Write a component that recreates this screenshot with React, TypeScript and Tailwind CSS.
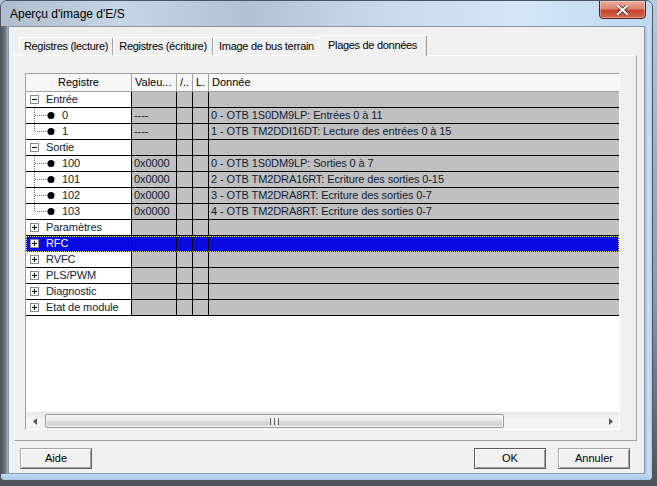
import React from 'react';

type Row = {
  kind: 'group' | 'child';
  label: string;
  open?: boolean;
  last?: boolean;
  val?: string;
  data?: string;
  selected?: boolean;
};

const rows: Row[] = [
  { kind: 'group', label: 'Entrée', open: true },
  { kind: 'child', label: '0', val: '----', data: '0 - OTB 1S0DM9LP: Entrées 0 à 11' },
  { kind: 'child', label: '1', val: '----', data: '1 - OTB TM2DDI16DT: Lecture des entrées 0 à 15', last: true },
  { kind: 'group', label: 'Sortie', open: true },
  { kind: 'child', label: '100', val: '0x0000', data: '0 - OTB 1S0DM9LP: Sorties 0 à 7' },
  { kind: 'child', label: '101', val: '0x0000', data: '2 - OTB TM2DRA16RT: Ecriture des sorties 0-15' },
  { kind: 'child', label: '102', val: '0x0000', data: '3 - OTB TM2DRA8RT: Ecriture des sorties 0-7' },
  { kind: 'child', label: '103', val: '0x0000', data: '4 - OTB TM2DRA8RT: Ecriture des sorties 0-7', last: true },
  { kind: 'group', label: 'Paramètres' },
  { kind: 'group', label: 'RFC', selected: true },
  { kind: 'group', label: 'RVFC' },
  { kind: 'group', label: 'PLS/PWM' },
  { kind: 'group', label: 'Diagnostic' },
  { kind: 'group', label: 'Etat de module' },
];

const tabs = [
  { label: 'Registres (lecture)', w: 'w-[94px]' },
  { label: 'Registres (écriture)', w: 'w-[100px]' },
  { label: 'Image de bus terrain', w: 'w-[107px]' },
];

function ExpandBox({ open }: { open?: boolean }) {
  return (
    <svg width="9" height="9" viewBox="0 0 9 9" className="shrink-0" shapeRendering="crispEdges">
      <rect x="0.5" y="0.5" width="8" height="8" fill="#fff" stroke="#8c8c8c" />
      <line x1="2" y1="4.5" x2="7" y2="4.5" stroke="#000" />
      {!open && <line x1="4.5" y1="2" x2="4.5" y2="7" stroke="#000" />}
    </svg>
  );
}

function ChildLines({ last }: { last?: boolean }) {
  return (
    <svg width="36" height="15" viewBox="0 0 36 15" className="shrink-0">
      <line x1="8.5" y1="0" x2="8.5" y2={last ? 7.5 : 15} stroke="#7a7a7a" strokeDasharray="1 1" shapeRendering="crispEdges" />
      <line x1="9" y1="7.5" x2="22" y2="7.5" stroke="#7a7a7a" strokeDasharray="1 1" shapeRendering="crispEdges" />
      <circle cx="25" cy="7.5" r="3.5" fill="#000" />
    </svg>
  );
}

function GridRow({ row }: { row: Row }) {
  const sel = row.selected;
  const cell = sel ? 'bg-[#0808e0]' : 'bg-[#c0c0c0]';
  return (
    <div
      className={`flex h-[16px] border-b border-black leading-[15px] tracking-[-0.1px] ${
        sel ? 'text-white outline-1 outline-dotted outline-[#e6e680] -outline-offset-1' : 'text-[#0f1c36]'
      }`}
    >
      <div className={`w-[106px] shrink-0 border-r border-black flex items-center ${sel ? 'bg-[#0808e0]' : 'bg-white'}`}>
        {row.kind === 'group' ? (
          <>
            <span className="ml-[4px]">
              <ExpandBox open={row.open} />
            </span>
            <span className="ml-[7px] whitespace-nowrap">{row.label}</span>
          </>
        ) : (
          <>
            <ChildLines last={row.last} />
            <span className="whitespace-nowrap">{row.label}</span>
          </>
        )}
      </div>
      <div className={`w-[45px] shrink-0 border-r border-black pl-[2px] ${cell}`}>{row.val}</div>
      <div className={`w-[16px] shrink-0 border-r border-black ${cell}`} />
      <div className={`w-[16px] shrink-0 border-r border-black ${cell}`} />
      <div className={`flex-1 pl-[2px] whitespace-nowrap overflow-hidden ${cell}`}>{row.data}</div>
    </div>
  );
}

function HeaderCell({ w, children, center }: { w: string; children?: React.ReactNode; center?: boolean }) {
  return (
    <div
      className={`${w} shrink-0 h-full border-r border-[#a0a0a0] shadow-[inset_1px_0_0_#ffffff] whitespace-nowrap overflow-hidden ${
        center ? 'text-center' : 'pl-[3px]'
      }`}
    >
      {children}
    </div>
  );
}

function Scrollbar() {
  return (
    <div className="h-[17px] flex bg-[linear-gradient(180deg,#e9e9e9,#f6f6f6_40%,#f3f3f3)] border-t border-[#e3e3e3]">
      <div className="w-[17px] flex items-center justify-center">
        <svg width="4" height="7" viewBox="0 0 4 7">
          <path d="M4 0 L0 3.5 L4 7 Z" fill="#5a5a5a" />
        </svg>
      </div>
      <div className="flex-1 flex py-[1px] pl-[2px]">
        <div className="w-[459px] h-full rounded-[2px] border border-[#979797] bg-[linear-gradient(180deg,#f4f4f4,#e9e9e9_45%,#d9d9d9_55%,#d1d1d1)] shadow-[inset_0_0_0_1px_#f8f8f8] flex items-center justify-center gap-[1px]">
          <span className="w-[1px] h-[7px] bg-[#6e6e6e]" />
          <span className="w-[1px] h-[7px] bg-[#f5f5f5]" />
          <span className="w-[1px] h-[7px] bg-[#6e6e6e]" />
          <span className="w-[1px] h-[7px] bg-[#f5f5f5]" />
          <span className="w-[1px] h-[7px] bg-[#6e6e6e]" />
        </div>
      </div>
      <div className="w-[17px] flex items-center justify-center">
        <svg width="4" height="7" viewBox="0 0 4 7">
          <path d="M0 0 L4 3.5 L0 7 Z" fill="#5a5a5a" />
        </svg>
      </div>
    </div>
  );
}

function Btn({ label, dflt }: { label: string; dflt?: boolean }) {
  return (
    <button
      className={`w-[72px] h-[21px] bg-[#f0f0f0] text-[11px] text-black border ${
        dflt
          ? 'border-[#5e5e5e] shadow-[inset_1px_1px_0_#ffffff,inset_-1px_-1px_0_#a0a0a0]'
          : 'border-[#a8a8a8] border-r-[#646464] border-b-[#646464] shadow-[inset_1px_1px_0_#ffffff,inset_-1px_-1px_0_#a0a0a0]'
      }`}
    >
      {label}
    </button>
  );
}

export default function App() {
  return (
    <div className="w-[657px] h-[486px] overflow-hidden bg-[linear-gradient(180deg,#b7c9da,#8c9aa8_60%,#4d5257)] font-['Liberation_Sans',Arial,sans-serif] text-[11px] text-black">
      <div className="w-[653px] h-[481px] flex flex-col rounded-t-[7px] rounded-b-[5px] border border-[#4a5662] overflow-hidden bg-[#bcd6ef]">
        {/* title bar */}
        <div className="h-[25px] flex items-start bg-[linear-gradient(90deg,#aebccb_0%,#c7d6e4_18%,#b2c2d2_38%,#c9dcee_60%,#d3e6f8_80%,#bed8f1_100%)]">
          <span className="pl-[9px] pt-[5px] text-[12px] leading-[16px] text-black">Aperçu d'image d'E/S</span>
          <div className="ml-auto mr-[6px] -mt-px w-[47px] h-[19px] rounded-b-[4px] border border-[#5a2119] bg-[linear-gradient(180deg,#e9ab9a_0%,#dc8670_45%,#c7452f_55%,#d2684c_100%)] shadow-[inset_0_0_0_1px_rgba(255,255,255,0.35)] flex items-center justify-center">
            <svg width="11" height="10" viewBox="0 0 11 10">
              <path d="M1 1 L10 9 M10 1 L1 9" stroke="#5a2119" strokeWidth="3.4" strokeLinecap="square" />
              <path d="M1 1 L10 9 M10 1 L1 9" stroke="#ffffff" strokeWidth="2" strokeLinecap="square" />
            </svg>
          </div>
        </div>

        <div className="flex h-[448px]">
          <div className="w-[7px] bg-[linear-gradient(90deg,#50565c,#6d757d_60%,#9fb7cf)]" />
          {/* client area */}
          <div className="w-[637px] h-full bg-[#f0f0f0] border border-[#8497ab] flex flex-col pl-[5px] pr-[7px] pt-[8px]">
            {/* tabs */}
            <div className="h-[20px] flex items-end pl-[5px] relative z-10 tracking-[-0.3px]">
              {tabs.map((t) => (
                <div
                  key={t.label}
                  className={`${t.w} h-[18px] shrink-0 border-t border-l border-white border-r border-r-[#a0a0a0] rounded-t-[2px] text-center leading-[16px] whitespace-nowrap`}
                >
                  {t.label}
                </div>
              ))}
              <div className="w-[109px] h-[21px] shrink-0 -ml-[2px] -mb-px bg-[#f0f0f0] border-t border-l border-white border-r border-r-[#a0a0a0] shadow-[inset_-1px_0_0_#e3e3e3] rounded-t-[2px] text-center leading-[18px] whitespace-nowrap">
                Plages de données
              </div>
            </div>
            {/* panel */}
            <div className="h-[386px] flex flex-col border border-white border-r-[#a0a0a0] border-b-[#a0a0a0] pl-[10px] pr-[16px] pt-[17px] pb-[10px]">
              <div className="flex-1 flex flex-col bg-white border border-[#a0a0a0] border-r-white border-b-white">
                {/* header */}
                <div className="h-[18px] flex border-b border-[#a0a0a0] bg-[#f7f7f7] leading-[16px]">
                  <HeaderCell w="w-[106px]" center>
                    Registre
                  </HeaderCell>
                  <HeaderCell w="w-[45px]">Valeu...</HeaderCell>
                  <HeaderCell w="w-[16px]">/..</HeaderCell>
                  <HeaderCell w="w-[16px]">L.</HeaderCell>
                  <div className="flex-1 pl-[3px] shadow-[inset_1px_0_0_#ffffff]">Donnée</div>
                </div>
                {rows.map((r) => (
                  <GridRow key={r.label} row={r} />
                ))}
                <div className="flex-1 bg-white" />
                <Scrollbar />
              </div>
            </div>
            {/* buttons */}
            <div className="h-[21px] mt-[7px] flex ml-[6px] mr-[7px]">
              <Btn label="Aide" />
              <div className="ml-auto flex gap-[12px]">
                <Btn label="OK" dflt />
                <Btn label="Annuler" />
              </div>
            </div>
          </div>
          <div className="w-[7px] bg-[linear-gradient(90deg,#a7c4e0,#c9e0f6_50%,#b4d0ec)]" />
        </div>
        <div className="flex-1 bg-[linear-gradient(180deg,#c2dcf4,#a9c7e6)]" />
      </div>
    </div>
  );
}
